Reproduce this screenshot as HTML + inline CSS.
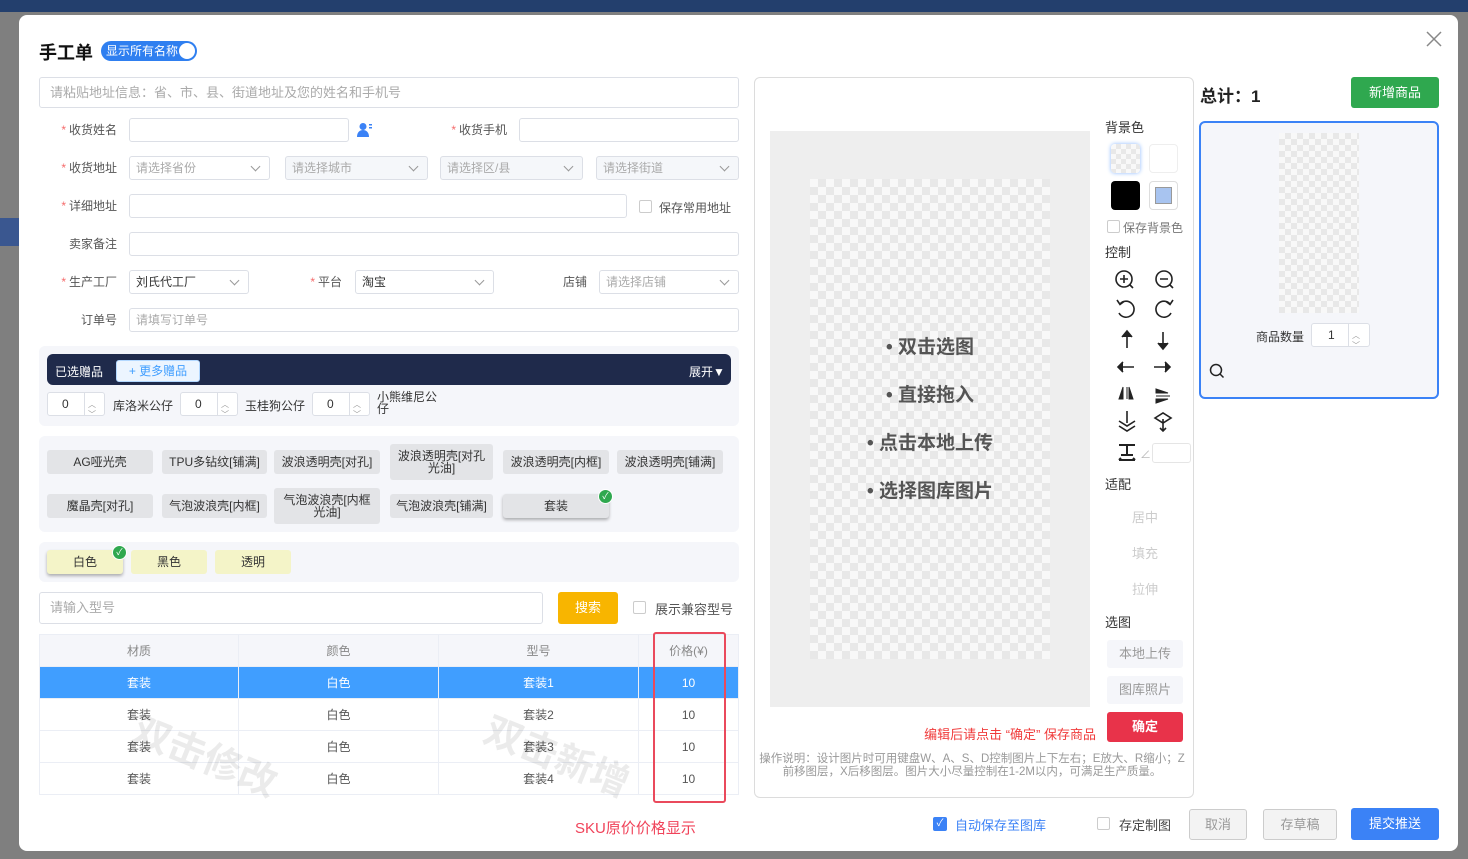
<!DOCTYPE html>
<html><head><meta charset="utf-8"><style>
*{box-sizing:border-box;margin:0;padding:0}
body{width:1468px;height:859px;overflow:hidden;background:#7f7f7f;font-family:"Liberation Sans","Noto Sans CJK SC",sans-serif;font-size:12px;color:#333;position:relative}
.a{position:absolute}
.inp{position:absolute;border:1px solid #dcdfe6;border-radius:3px;background:#fff;height:24px;padding-left:6px;line-height:22px;color:#aaa;font-size:12px}
.sel:after{content:"";position:absolute;right:10px;top:6px;width:6px;height:6px;border-right:1px solid #999;border-bottom:1px solid #999;transform:rotate(45deg)}
.dis{background:#f5f7fa}
.lbl{position:absolute;width:80px;text-align:right;font-size:12px;color:#555;line-height:24px}
.lbl b{color:#f56c6c;font-weight:normal;margin-right:3px}
.chip{position:absolute;background:#e3e4e7;border-radius:3px;text-align:center;font-size:12px;color:#333;display:flex;align-items:center;justify-content:center;line-height:12px}
.cchip{position:absolute;background:#f4f4c8;border-radius:3px;text-align:center;font-size:12px;line-height:24px;height:24px;width:76px;top:550px}
.chk{position:absolute;width:13px;height:13px;border:1px solid #ccc;border-radius:2px;background:#fff}
.ok{position:absolute;width:15px;height:15px;border-radius:50%;background:#2fa84f;border:1px solid #fff;color:#fff;font-size:9px;line-height:13px;text-align:center}
.num{position:absolute;border:1px solid #dcdfe6;border-radius:3px;background:#fff;height:24px;width:58px;font-size:12px;line-height:22px;padding-left:14px;color:#333}
.num:after{content:"";position:absolute;left:36px;top:0;bottom:0;border-left:1px solid #dcdfe6}
.num i{position:absolute;left:40px;font-style:normal;font-size:8px;color:#999}
table{border-collapse:collapse;position:absolute;left:39px;top:634px;width:700px;font-size:12px}
td{border:1px solid #ebeef5;height:32px;text-align:center;color:#555}
.ck{background:repeating-conic-gradient(#e8e8e8 0 25%,#f8f8f8 0 50%) 0 0/16px 16px}
.tl{position:absolute;width:76px;text-align:center;font-size:13px;color:#ccc}
.btn{position:absolute;border-radius:3px;text-align:center;font-size:13px}
</style></head><body>
<div class="a" style="left:0;top:0;width:1468px;height:12px;background:#233f6d"></div>
<div class="a" style="left:0;top:218px;width:19px;height:28px;background:#3a5790"></div>
<div class="a" style="left:19px;top:15px;width:1439px;height:836px;background:#fff;border-radius:8px"></div>

<div class="a" style="left:39px;top:39px;font-size:18px;font-weight:bold;color:#111">手工单</div>
<div class="a" style="left:101px;top:41px;width:96px;height:20px;border-radius:10px;background:#2f7ff0;color:#fff;font-size:12px;line-height:20px;padding-left:5px">显示所有名称<span style="position:absolute;right:2px;top:2px;width:16px;height:16px;border-radius:50%;background:#fff"></span></div>
<svg class="a" style="left:1426px;top:31px" width="16" height="16"><path d="M1 1L15 15M15 1L1 15" stroke="#888" stroke-width="1.5"/></svg>

<div class="inp" style="left:39px;top:77px;width:700px;height:31px;line-height:30px;padding-left:10px;font-size:13px">请粘贴地址信息：省、市、县、街道地址及您的姓名和手机号</div>

<div class="lbl" style="left:37px;top:118px"><b>*</b>收货姓名</div>
<div class="inp" style="left:129px;top:118px;width:220px"></div>
<svg class="a" style="left:357px;top:122px" width="16" height="16"><circle cx="6" cy="4.5" r="3.5" fill="#3b82f6"/><path d="M0 15c0-5 3-7 6-7s6 2 6 7z" fill="#3b82f6"/><rect x="12" y="2" width="3" height="1.5" fill="#3b82f6"/><rect x="12" y="5" width="3" height="1.5" fill="#3b82f6"/></svg>
<div class="lbl" style="left:427px;top:118px"><b>*</b>收货手机</div>
<div class="inp" style="left:519px;top:118px;width:220px"></div>

<div class="lbl" style="left:37px;top:156px"><b>*</b>收货地址</div>
<div class="inp sel" style="left:129px;top:156px;width:141px">请选择省份</div>
<div class="inp sel dis" style="left:285px;top:156px;width:143px">请选择城市</div>
<div class="inp sel dis" style="left:440px;top:156px;width:143px">请选择区/县</div>
<div class="inp sel dis" style="left:596px;top:156px;width:143px">请选择街道</div>

<div class="lbl" style="left:37px;top:194px"><b>*</b>详细地址</div>
<div class="inp" style="left:129px;top:194px;width:498px"></div>
<div class="chk" style="left:639px;top:200px"></div>
<div class="a" style="left:659px;top:199px;color:#555">保存常用地址</div>

<div class="lbl" style="left:37px;top:232px">卖家备注</div>
<div class="inp" style="left:129px;top:232px;width:610px"></div>

<div class="lbl" style="left:37px;top:270px"><b>*</b>生产工厂</div>
<div class="inp sel" style="left:129px;top:270px;width:120px;color:#333">刘氏代工厂</div>
<div class="lbl" style="left:262px;top:270px"><b>*</b>平台</div>
<div class="inp sel" style="left:355px;top:270px;width:139px;color:#333">淘宝</div>
<div class="lbl" style="left:507px;top:270px">店铺</div>
<div class="inp sel" style="left:599px;top:270px;width:140px">请选择店铺</div>

<div class="lbl" style="left:37px;top:308px">订单号</div>
<div class="inp" style="left:129px;top:308px;width:610px">请填写订单号</div>

<div class="a" style="left:39px;top:346px;width:700px;height:80px;background:#f5f6fa;border-radius:6px"></div>
<div class="a" style="left:47px;top:354px;width:684px;height:31px;background:#1f2a4b;border-radius:6px"></div>
<div class="a" style="left:55px;top:363px;color:#fff">已选赠品</div>
<div class="a" style="left:116px;top:360px;width:84px;height:22px;background:#ecf5ff;border:1px solid #b3d8ff;border-radius:3px;color:#409eff;text-align:center;line-height:20px">+ 更多赠品</div>
<div class="a" style="left:689px;top:363px;color:#fff">展开▼</div>
<div class="num" style="left:47px;top:392px">0<i style="top:1px">︿</i><i style="top:11px">﹀</i></div>
<div class="a" style="left:113px;top:397px">库洛米公仔</div>
<div class="num" style="left:180px;top:392px">0<i style="top:1px">︿</i><i style="top:11px">﹀</i></div>
<div class="a" style="left:245px;top:397px">玉桂狗公仔</div>
<div class="num" style="left:312px;top:392px">0<i style="top:1px">︿</i><i style="top:11px">﹀</i></div>
<div class="a" style="left:377px;top:391px;width:62px;line-height:12px">小熊维尼公仔</div>

<div class="a" style="left:39px;top:436px;width:700px;height:96px;background:#f5f6fa;border-radius:6px"></div>
<div class="chip" style="left:47px;top:450px;width:106px;height:24px">AG哑光壳</div>
<div class="chip" style="left:162px;top:450px;width:105px;height:24px">TPU多钻纹[铺满]</div>
<div class="chip" style="left:274px;top:450px;width:106px;height:24px">波浪透明壳[对孔]</div>
<div class="chip" style="left:390px;top:444px;width:103px;height:36px">波浪透明壳[对孔<br>光油]</div>
<div class="chip" style="left:503px;top:450px;width:106px;height:24px">波浪透明壳[内框]</div>
<div class="chip" style="left:617px;top:450px;width:106px;height:24px">波浪透明壳[铺满]</div>
<div class="chip" style="left:47px;top:494px;width:106px;height:24px">魔晶壳[对孔]</div>
<div class="chip" style="left:162px;top:494px;width:105px;height:24px">气泡波浪壳[内框]</div>
<div class="chip" style="left:274px;top:488px;width:106px;height:36px">气泡波浪壳[内框<br>光油]</div>
<div class="chip" style="left:390px;top:494px;width:103px;height:24px">气泡波浪壳[铺满]</div>
<div class="chip" style="left:503px;top:494px;width:106px;height:24px;box-shadow:0 2px 3px rgba(0,0,0,.3)">套装</div>
<div class="ok" style="left:598px;top:489px">✓</div>

<div class="a" style="left:39px;top:542px;width:700px;height:40px;background:#f5f6fa;border-radius:6px"></div>
<div class="cchip" style="left:47px;box-shadow:0 2px 3px rgba(0,0,0,.3)">白色</div>
<div class="ok" style="left:112px;top:545px">✓</div>
<div class="cchip" style="left:131px">黑色</div>
<div class="cchip" style="left:215px">透明</div>

<div class="inp" style="left:39px;top:592px;width:504px;height:32px;line-height:30px;font-size:13px;padding-left:10px">请输入型号</div>
<div class="btn" style="left:558px;top:592px;width:60px;height:32px;background:#f8b500;color:#fff;line-height:32px">搜索</div>
<div class="chk" style="left:633px;top:601px"></div>
<div class="a" style="left:655px;top:599px;font-size:13px;color:#555">展示兼容型号</div>

<table>
<tr style="background:#f5f6fa"><td style="width:199px;color:#888">材质</td><td style="width:200px;color:#888">颜色</td><td style="width:200px;color:#888">型号</td><td style="color:#888">价格(¥)</td></tr>
<tr style="background:#409eff"><td style="color:#fff">套装</td><td style="color:#fff">白色</td><td style="color:#fff">套装1</td><td style="color:#fff">10</td></tr>
<tr><td>套装</td><td>白色</td><td>套装2</td><td>10</td></tr>
<tr><td>套装</td><td>白色</td><td>套装3</td><td>10</td></tr>
<tr><td>套装</td><td>白色</td><td>套装4</td><td>10</td></tr>
</table>
<div class="a" style="left:130px;top:726px;font-size:38px;font-weight:bold;color:rgba(0,0,0,.08);transform:rotate(22deg)">双击修改</div>
<div class="a" style="left:482px;top:726px;font-size:38px;font-weight:bold;color:rgba(0,0,0,.08);transform:rotate(22deg)">双击新增</div>
<div class="a" style="left:653px;top:632px;width:73px;height:171px;border:2px solid #ea4a5c;border-radius:3px"></div>
<div class="a" style="left:575px;top:817px;font-size:15px;color:#f0435a">SKU原价价格显示</div>

<div class="a" style="left:754px;top:77px;width:440px;height:721px;border:1px solid #dcdcdc;border-radius:6px"></div>
<div class="a" style="left:770px;top:131px;width:320px;height:576px;background:#eee"></div>
<div class="a ck" style="left:810px;top:179px;width:240px;height:480px"></div>
<div class="a" style="left:770px;top:324px;width:320px;text-align:center;font-size:19px;font-weight:bold;color:#555;line-height:48px">• 双击选图<br>• 直接拖入<br>• 点击本地上传<br>• 选择图库图片</div>

<div class="a" style="left:1105px;top:117px;font-size:13px">背景色</div>
<div class="a ck" style="left:1111px;top:144px;width:29px;height:29px;border-radius:4px;box-shadow:0 0 4px #8bb8ff;background-size:10px 10px"></div>
<div class="a" style="left:1149px;top:144px;width:29px;height:29px;border-radius:4px;border:1px solid #eee;background:#fff"></div>
<div class="a" style="left:1111px;top:181px;width:29px;height:29px;border-radius:4px;background:#000"></div>
<div class="a" style="left:1149px;top:181px;width:29px;height:29px;border-radius:4px;border:1px solid #ddd;background:#fff"><div style="margin:5px;width:17px;height:17px;background:#a8c4f0;border:1px solid #999"></div></div>
<div class="chk" style="left:1107px;top:220px"></div>
<div class="a" style="left:1123px;top:219px;color:#777">保存背景色</div>
<div class="a" style="left:1105px;top:242px;font-size:13px">控制</div>
<svg class="a" style="left:1110px;top:265px" width="70" height="200" fill="none" stroke="#222" stroke-width="1.6">
<circle cx="14" cy="14" r="8"/><path d="M20 20l3 3M10 14h8M14 10v8"/>
<circle cx="54" cy="14" r="8"/><path d="M60 20l3 3M50 14h8"/>
<path d="M10 39a8 8 0 1 1-1 9"/><path d="M7 35l3 4.5 4-3" />
<path d="M60 39a8 8 0 1 0 1 9"/><path d="M63 35l-3 4.5-4-3"/>
<path d="M17 83V67M12 72l5-6 5 6" fill="#222"/>
<path d="M53 67v16M48 78l5 6 5-6" fill="#222"/>
<path d="M8 102h16M13 97l-5 5 5 5" fill="#222"/>
<path d="M44 102h16M55 97l5 5-5 5" fill="#222"/>
<path d="M13 122l-4 12h4zM17 122v12M19 122l4 12h-4z" fill="#222" stroke-width="1"/>
<path d="M46 124l12 4-12 0zM46 131h14M46 134l12 0-12 4z" fill="#222" stroke-width="1"/>
<path d="M9 156l8 5 8-5M9 161l8 5 8-5M17 146v12"/>
<path d="M45 153l8-5 8 5-8 5zM53 154v12M50 163l3 3 3-3"/>
<path d="M9 180h16M17 180v10M11 190h12M9 195h16M9 195l2-2M25 195l-2-2" stroke-width="2"/>
</svg>
<div class="a" style="left:1140px;top:446px;color:#bbb;font-size:11px">∠</div>
<div class="a" style="left:1152px;top:443px;width:39px;height:20px;border:1px solid #e5e5e5;border-radius:3px"></div>
<div class="a" style="left:1105px;top:474px;font-size:13px">适配</div>
<div class="tl" style="left:1107px;top:507px">居中</div>
<div class="tl" style="left:1107px;top:543px">填充</div>
<div class="tl" style="left:1107px;top:579px">拉伸</div>
<div class="a" style="left:1105px;top:612px;font-size:13px">选图</div>
<div class="btn" style="left:1107px;top:640px;width:76px;height:28px;background:#f5f6fa;color:#999;line-height:28px">本地上传</div>
<div class="btn" style="left:1107px;top:676px;width:76px;height:28px;background:#f5f6fa;color:#999;line-height:28px">图库照片</div>
<div class="btn" style="left:1107px;top:712px;width:76px;height:30px;background:#e8334a;color:#fff;line-height:30px;font-weight:bold">确定</div>
<div class="a" style="left:840px;top:724px;width:256px;text-align:right;font-size:13px;color:#f03c3c">编辑后请点击 “确定” 保存商品</div>
<div class="a" style="left:757px;top:753px;width:430px;text-align:center;color:#999;font-size:11.5px;line-height:13px">操作说明：设计图片时可用键盘W、A、S、D控制图片上下左右；E放大、R缩小；Z前移图层，X后移图层。图片大小尽量控制在1-2M以内，可满足生产质量。</div>

<div class="a" style="left:1200px;top:82px;font-size:17px;font-weight:bold;color:#222">总计：1</div>
<div class="btn" style="left:1351px;top:77px;width:88px;height:31px;background:#2fa84f;color:#fff;line-height:31px">新增商品</div>
<div class="a" style="left:1199px;top:121px;width:240px;height:278px;border:2px solid #3b82f6;border-radius:6px;background:#f5f6fa"></div>
<div class="a ck" style="left:1279px;top:133px;width:80px;height:180px;background-size:12px 12px"></div>
<div class="a" style="left:1256px;top:328px;color:#333">商品数量</div>
<div class="num" style="left:1311px;top:323px;width:59px;padding-left:16px">1<i style="top:1px">︿</i><i style="top:11px">﹀</i></div>
<svg class="a" style="left:1209px;top:363px" width="16" height="16" fill="none" stroke="#222" stroke-width="1.5"><circle cx="7" cy="7" r="5.5"/><path d="M11 11l3.5 3.5"/></svg>

<div class="a" style="left:933px;top:817px;width:14px;height:14px;border-radius:2px;background:#3b82f6;color:#fff;font-size:10px;line-height:14px;text-align:center">✓</div>
<div class="a" style="left:955px;top:815px;font-size:13px;color:#3b82f6">自动保存至图库</div>
<div class="chk" style="left:1097px;top:817px"></div>
<div class="a" style="left:1119px;top:815px;font-size:13px;color:#444">存定制图</div>
<div class="btn" style="left:1189px;top:809px;width:58px;height:31px;border:1px solid #ccc;background:#f3f3f3;color:#999;line-height:29px">取消</div>
<div class="btn" style="left:1263px;top:809px;width:74px;height:31px;border:1px solid #ccc;background:#f3f3f3;color:#999;line-height:29px">存草稿</div>
<div class="btn" style="left:1351px;top:808px;width:88px;height:32px;background:#3b82f6;color:#fff;line-height:32px">提交推送</div>
</body></html>
